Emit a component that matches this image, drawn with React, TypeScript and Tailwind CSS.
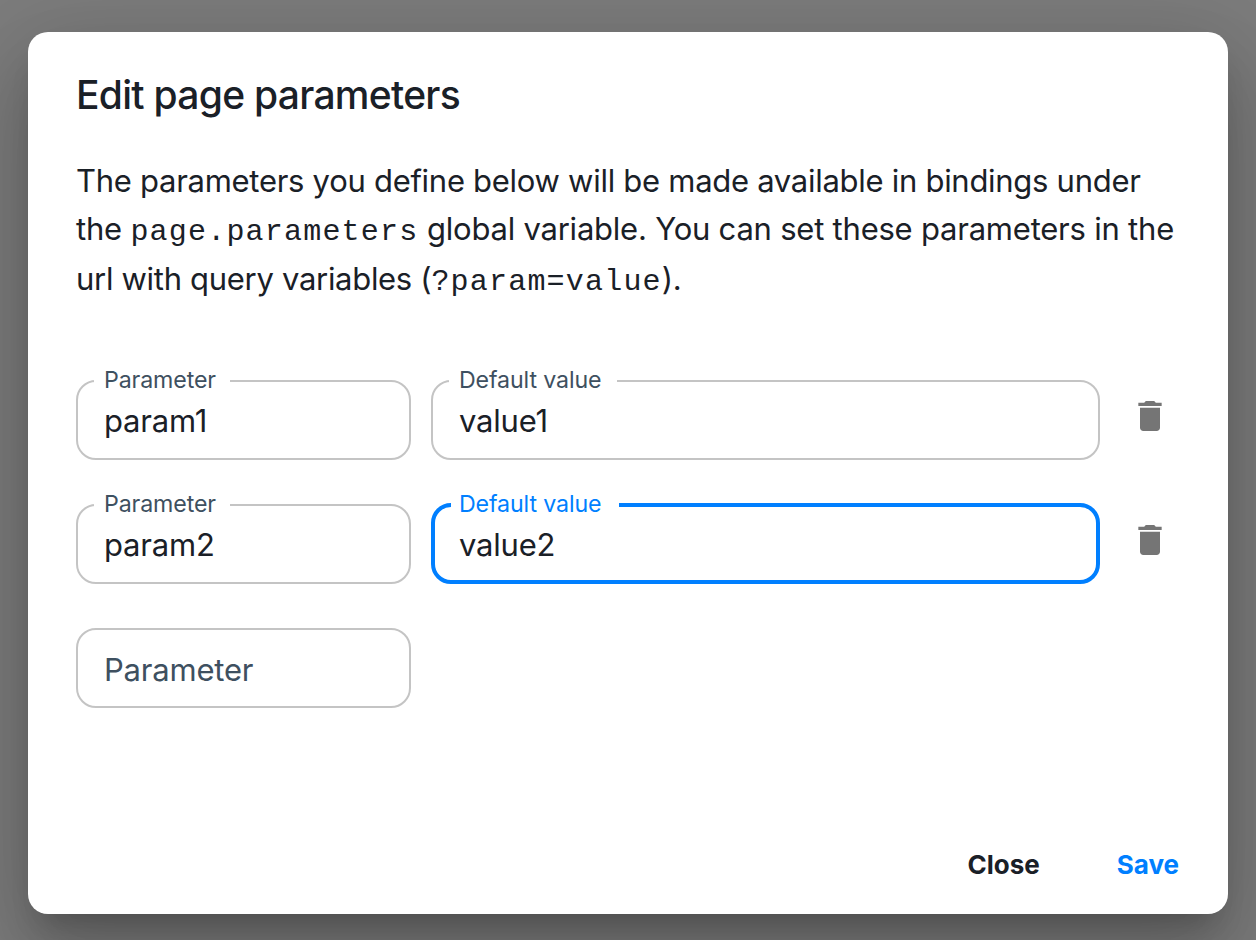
import React from "react";

function Field({ label, value, width, notch, focused = false }: { label: string; value?: string; width: string; notch?: string; focused?: boolean }) {
  return (
    <fieldset
      className={`${width} ${value ? "h-[92px] -mt-3" : "h-20"} min-w-0 rounded-[20px] pl-4 ${focused ? "border-4 border-[#007fff]" : "border-2 border-[#c4c4c4]"}`}
    >
      {value && (
        <legend className={`${notch} h-[26px] text-[23.2px] leading-6 tracking-[-0.12px] whitespace-nowrap ${focused ? "pl-2 text-[#007fff]" : "pl-[10px] text-[#3e5060]"}`}>
          {label}
        </legend>
      )}
      <div className={`text-[31px] tracking-[-0.2px] ${focused ? "pl-2" : "pl-[10px]"} ${value ? "leading-[54px] text-[#1a2027]" : "leading-[80px] text-[#3e5060]"}`}>{value ?? label}</div>
    </fieldset>
  );
}

function Trash() {
  return (
    <button aria-label="Delete" className="ml-[30px] flex h-[72px] w-10 items-center justify-center text-[#757575]">
      <svg viewBox="0 0 24 24" className="size-10" fill="currentColor">
        <path d="M6 19c0 1.1.9 2 2 2h8c1.1 0 2-.9 2-2V7H6zM19 4h-3.5l-1-1h-5l-1 1H5v2h14z" />
      </svg>
    </button>
  );
}

function Code({ children }: { children: string }) {
  return <code className="font-['Liberation_Mono',monospace] text-[30px] leading-none tracking-[1.2px]">{children}</code>;
}

function Row({ name, value, focused }: { name: string; value: string; focused?: boolean }) {
  return (
    <div className="flex h-[124px] shrink-0">
      <Field label="Parameter" value={name} width="w-[335px]" notch="w-[136px]" />
      <div className="w-5" />
      <Field label="Default value" value={value} width="w-[669px]" notch="w-[168px]" focused={focused} />
      <Trash />
    </div>
  );
}

export default function App() {
  return (
    <div className="h-[940px] w-[1256px] overflow-hidden bg-[#7c7c7c] px-7 pt-8 font-['Inter',sans-serif] text-[#1a2027]">
      <main className="flex h-[882px] flex-col rounded-[20px] bg-white px-12 shadow-[0_22px_30px_-14px_rgba(0,0,0,0.2),0_48px_76px_6px_rgba(0,0,0,0.14),0_18px_92px_16px_rgba(0,0,0,0.12)]">
        <h1 className="pt-8 text-[39px] leading-[62px] font-medium tracking-[-0.72px]">Edit page parameters</h1>
        <div className="mt-[31px] h-[223px] text-[31px] whitespace-nowrap">
          <p className="h-12 leading-[48px] tracking-[-0.28px]">The parameters you define below will be made available in bindings under</p>
          <p className="h-[49px] leading-[48px] tracking-[-0.22px]">
            the <Code>page.parameters</Code> global variable. You can set these parameters in the
          </p>
          <p className="h-12 leading-[50px] tracking-[-0.3px]">
            url with query variables (<Code>?param=value</Code>).
          </p>
        </div>
        <Row name="param1" value="value1" />
        <Row name="param2" value="value2" focused />
        <Field label="Parameter" width="w-[335px]" />
        <div className="mt-auto mb-5 flex justify-end gap-[77px] pr-px text-[26px] leading-[58px] font-bold">
          <button>Close</button>
          <button className="text-[#007fff]">Save</button>
        </div>
      </main>
    </div>
  );
}
